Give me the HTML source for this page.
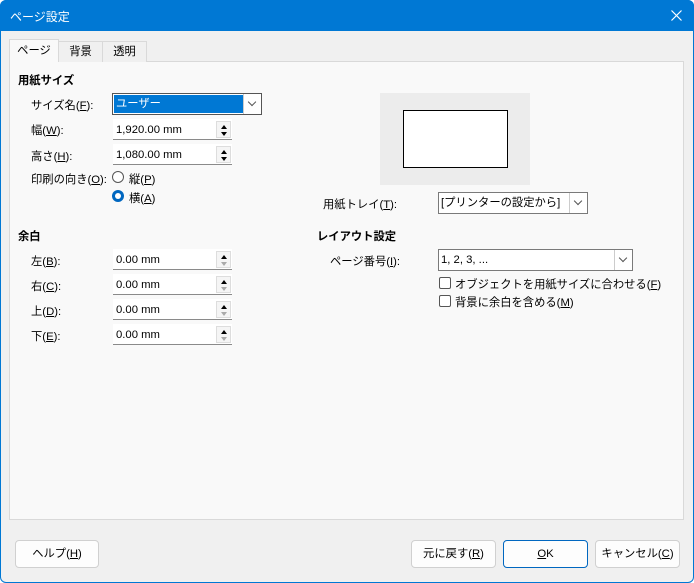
<!DOCTYPE html>
<html><head><meta charset="utf-8"><style>
*{box-sizing:border-box;margin:0;padding:0}
body{width:694px;height:583px;overflow:hidden;font-family:"Liberation Sans","Noto Sans CJK JP",sans-serif;font-size:11.3px;color:#000;background:#fff}
.win{position:absolute;left:0;top:0;width:694px;height:583px;background:#f0f0f0;border-radius:6px;overflow:hidden;box-shadow:inset 0 0 0 1px #0078d4}
.title{position:absolute;left:0;top:0;width:694px;height:31px;background:#0078d4;color:#fff;font-size:12px}
.a{position:absolute;white-space:nowrap}
.panel{position:absolute;left:9px;top:61px;width:675px;height:459px;background:#f9f9f9;border:1px solid #d9d9d9}
.tab{position:absolute;top:41px;height:21px;border:1px solid #d9d9d9;border-bottom:none;background:#f0f0f0;text-align:center;line-height:20px}
.b{font-weight:bold}
.field{position:absolute;width:119px;height:21px;background:#fff;border-bottom:1px solid #8a8a8a;padding-left:3px;line-height:22px}
.spin{position:absolute;right:1px;top:2px;width:15px;height:17px;border:1px solid #ddd;background:#f5f5f5}
.spin i{position:absolute;left:4px;width:0;height:0;border-left:3px solid transparent;border-right:3px solid transparent}
.sel{position:absolute;height:22px;background:#fff;border:1px solid #7a7a7a;line-height:21px;padding-left:2px}
.arr{position:absolute;right:0;top:0;width:18px;height:20px;border-left:1px solid #ccc;background:#fff}
.arr:after{content:"";position:absolute;left:5px;top:5px;width:5px;height:5px;border-right:1px solid #555;border-bottom:1px solid #555;transform:rotate(45deg)}
.btn{position:absolute;top:540px;height:28px;background:#fdfdfd;border:1px solid #d0d0d0;border-radius:4px;text-align:center;line-height:26px}
.cb{position:absolute;width:12px;height:12px;border:1px solid #555;border-radius:2px;background:#fff}
u{text-decoration:underline}
</style></head><body><div class="win">
<div class="title"><span class="a" style="left:10px;top:8px">ページ設定</span>
<svg class="a" style="left:671px;top:10px" width="11" height="11"><path d="M0.5 0.5L10.5 10.5M10.5 0.5L0.5 10.5" stroke="#fff" stroke-width="1.2"/></svg></div>
<div class="panel"></div>
<div class="tab" style="left:58px;width:45px">背景</div>
<div class="tab" style="left:102px;width:45px">透明</div>
<div class="tab" style="left:9px;width:50px;top:39px;height:23px;background:#f9f9f9;line-height:23px">ページ</div>

<span class="a b" style="left:18px;top:72px">用紙サイズ</span>
<span class="a" style="left:31px;top:97px">サイズ名(<u>F</u>):</span>
<span class="a" style="left:31px;top:122px">幅(<u>W</u>):</span>
<span class="a" style="left:31px;top:148px">高さ(<u>H</u>):</span>
<span class="a" style="left:31px;top:171px">印刷の向き(<u>O</u>):</span>
<div class="sel" style="left:112px;top:93px;width:150px;border-color:#555"><div style="position:absolute;left:1px;top:1px;width:129px;height:18px;background:#0078d4;color:#fff;line-height:19px;padding-left:2px">ユーザー</div><div class="arr"></div></div>
<div class="field" style="left:113px;top:119px">1,920.00 mm<div class="spin"><i style="top:3px;border-bottom:4px solid #000"></i><i style="top:10px;border-top:4px solid #000"></i></div></div>
<div class="field" style="left:113px;top:144px">1,080.00 mm<div class="spin"><i style="top:3px;border-bottom:4px solid #000"></i><i style="top:10px;border-top:4px solid #000"></i></div></div>
<div class="a" style="left:112px;top:171px;width:12px;height:12px;border:1px solid #555;border-radius:50%;background:#fff"></div>
<span class="a" style="left:129px;top:171px">縦(<u>P</u>)</span>
<div class="a" style="left:112px;top:190px;width:12px;height:12px;border-radius:50%;background:#0067c0"><div style="position:absolute;left:3px;top:3px;width:6px;height:6px;border-radius:50%;background:#fff"></div></div>
<span class="a" style="left:129px;top:190px">横(<u>A</u>)</span>

<span class="a b" style="left:18px;top:228px">余白</span>
<span class="a" style="left:31px;top:253px">左(<u>B</u>):</span>
<span class="a" style="left:31px;top:278px">右(<u>C</u>):</span>
<span class="a" style="left:31px;top:303px">上(<u>D</u>):</span>
<span class="a" style="left:31px;top:328px">下(<u>E</u>):</span>
<div class="field" style="left:113px;top:249px">0.00 mm<div class="spin"><i style="top:3px;border-bottom:4px solid #000"></i><i style="top:10px;border-top:4px solid #aaa"></i></div></div>
<div class="field" style="left:113px;top:274px">0.00 mm<div class="spin"><i style="top:3px;border-bottom:4px solid #000"></i><i style="top:10px;border-top:4px solid #aaa"></i></div></div>
<div class="field" style="left:113px;top:299px">0.00 mm<div class="spin"><i style="top:3px;border-bottom:4px solid #000"></i><i style="top:10px;border-top:4px solid #aaa"></i></div></div>
<div class="field" style="left:113px;top:324px">0.00 mm<div class="spin"><i style="top:3px;border-bottom:4px solid #000"></i><i style="top:10px;border-top:4px solid #aaa"></i></div></div>

<div class="a" style="left:380px;top:93px;width:150px;height:92px;background:#ececec"></div>
<div class="a" style="left:403px;top:110px;width:105px;height:58px;background:#fff;border:1px solid #000"></div>
<span class="a" style="left:323px;top:196px">用紙トレイ(<u>T</u>):</span>
<div class="sel" style="left:438px;top:192px;width:150px">[プリンターの設定から]<div class="arr"></div></div>
<span class="a b" style="left:317px;top:228px">レイアウト設定</span>
<span class="a" style="left:330px;top:253px">ページ番号(<u>I</u>):</span>
<div class="sel" style="left:438px;top:249px;width:195px">1, 2, 3, ...<div class="arr"></div></div>
<div class="cb" style="left:439px;top:277px"></div>
<span class="a" style="left:455px;top:276px">オブジェクトを用紙サイズに合わせる(<u>F</u>)</span>
<div class="cb" style="left:439px;top:295px"></div>
<span class="a" style="left:455px;top:294px">背景に余白を含める(<u>M</u>)</span>

<div class="btn" style="left:15px;width:84px">ヘルプ(<u>H</u>)</div>
<div class="btn" style="left:411px;width:85px">元に戻す(<u>R</u>)</div>
<div class="btn" style="left:503px;width:85px;border-color:#0067c0"><u>O</u>K</div>
<div class="btn" style="left:595px;width:85px">キャンセル(<u>C</u>)</div>
</div></body></html>
